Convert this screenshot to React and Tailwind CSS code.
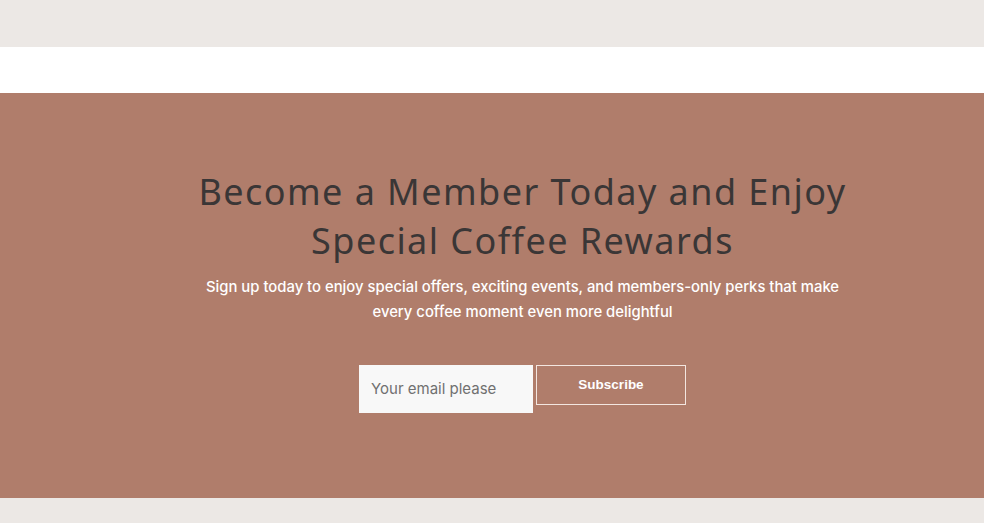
export default function App() {
  return (
    <div className="w-full min-h-[523px] bg-[#ece8e5] flex flex-col" style={{ fontFamily: "Inter, 'Liberation Sans', sans-serif" }}>
      <div className="h-[47px] bg-[#ece8e5]" />
      <div className="h-[46px] bg-white" />
      <section className="h-[405px] bg-[#b07d6b] flex flex-col items-center pl-[61px] pt-[74px]">
        <h1 className="text-[36px] leading-[49px] text-[#3a3636] text-center font-normal tracking-[1.45px] w-[720px]" style={{ fontFamily: "'Noto Sans', sans-serif" }}>
          Become a Member Today and Enjoy<br />Special Coffee Rewards
        </h1>
        <p className="mt-[10px] text-[14.85px] leading-[25px] text-white text-center font-medium w-[650px]">
          Sign up today to enjoy special offers, exciting events, and members-only perks that make every coffee moment even more delightful
        </p>
        <div className="mt-[40px] flex items-start gap-[3px]">
          <div className="w-[174px] h-[48px] bg-[#f8f8f8] flex items-center pl-[12px] text-[15px] text-[#707070]">
            Your email please
          </div>
          <button className="w-[150px] h-[40px] border border-[#f3e6e0] text-white text-[13.5px] font-bold flex items-center justify-center" style={{ fontFamily: "'Liberation Sans', Arial, sans-serif" }}>
            Subscribe
          </button>
        </div>
      </section>
      <div className="flex-1 bg-[#ece8e5]" />
    </div>
  );
}
